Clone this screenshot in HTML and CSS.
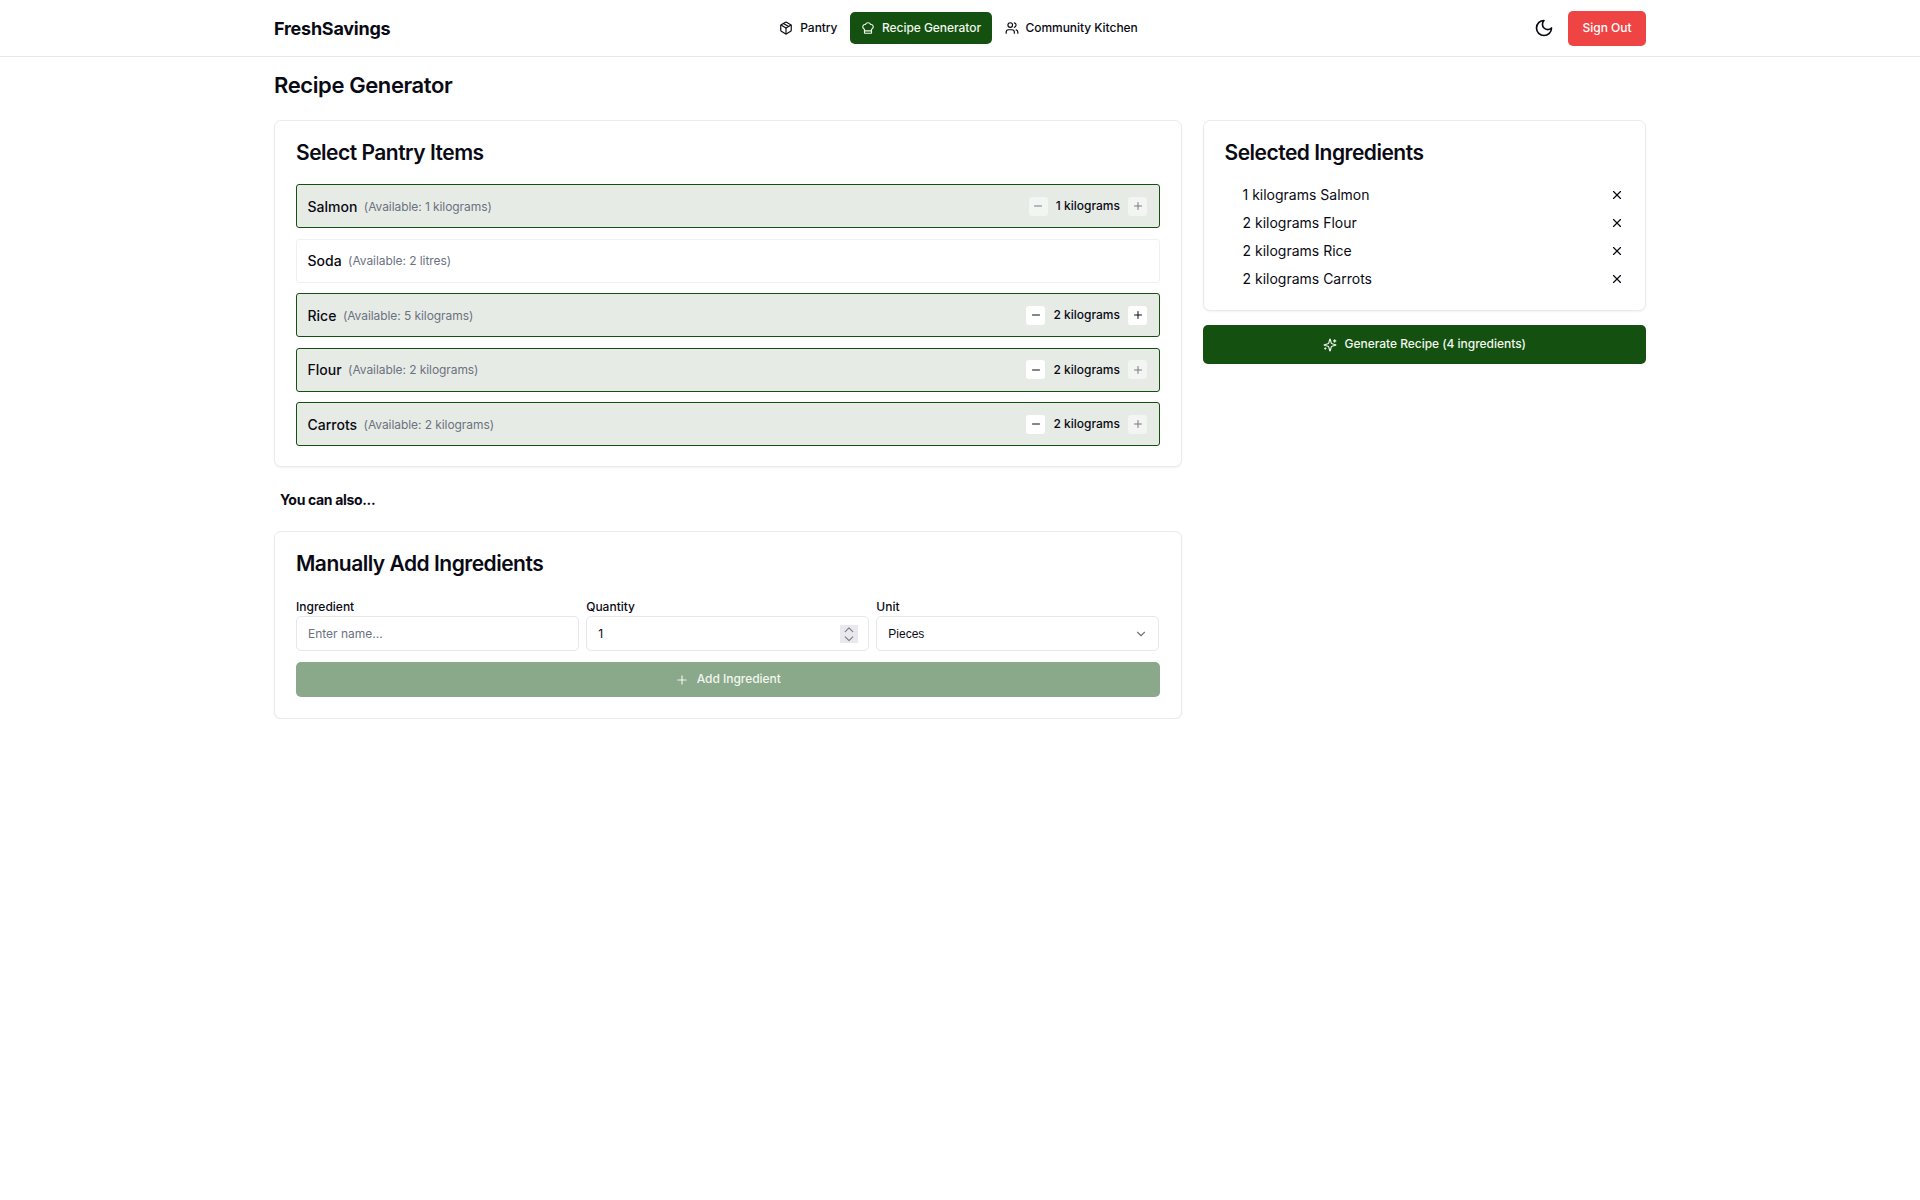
FILE: index.html
```html
<!DOCTYPE html>
<html lang="en">
<head>
<meta charset="utf-8">
<title>FreshSavings</title>
<link rel="stylesheet" href="styles.css">
</head>
<body>
<svg class="sprite" width="0" height="0" aria-hidden="true">
  <symbol id="i-package" viewBox="0 0 24 24"><path d="M11 21.73a2 2 0 0 0 2 0l7-4A2 2 0 0 0 21 16V8a2 2 0 0 0-1-1.73l-7-4a2 2 0 0 0-2 0l-7 4A2 2 0 0 0 3 8v8a2 2 0 0 0 1 1.73z"/><path d="M12 22V12"/><path d="m3.3 7 8.7 5 8.7-5"/><path d="m7.5 4.27 9 5.15"/></symbol>
  <symbol id="i-chef" viewBox="0 0 24 24"><path d="M17 21a1 1 0 0 0 1-1v-5.35c0-.457.316-.844.727-1.041a4 4 0 0 0-2.134-7.589 5 5 0 0 0-9.186 0 4 4 0 0 0-2.134 7.588c.411.198.727.585.727 1.041V20a1 1 0 0 0 1 1Z"/><path d="M6 17h12"/></symbol>
  <symbol id="i-users" viewBox="0 0 24 24"><path d="M16 21v-2a4 4 0 0 0-4-4H6a4 4 0 0 0-4 4v2"/><circle cx="9" cy="7" r="4"/><path d="M22 21v-2a4 4 0 0 0-3-3.87"/><path d="M16 3.13a4 4 0 0 1 0 7.75"/></symbol>
  <symbol id="i-moon" viewBox="0 0 24 24"><path d="M12 3a6 6 0 0 0 9 9 9 9 0 1 1-9-9Z"/></symbol>
  <symbol id="i-sparkles" viewBox="0 0 24 24"><path d="M9.937 15.5A2 2 0 0 0 8.5 14.063l-6.135-1.582a.5.5 0 0 1 0-.962L8.5 9.936A2 2 0 0 0 9.937 8.5l1.582-6.135a.5.5 0 0 1 .963 0L14.063 8.5A2 2 0 0 0 15.5 9.937l6.135 1.581a.5.5 0 0 1 0 .964L15.5 14.063a2 2 0 0 0-1.437 1.437l-1.582 6.135a.5.5 0 0 1-.963 0z"/><path d="M20 3v4"/><path d="M22 5h-4"/><path d="M4 17v2"/><path d="M5 18H3"/></symbol>
  <symbol id="i-x" viewBox="0 0 24 24"><path d="M18 6 6 18"/><path d="m6 6 12 12"/></symbol>
  <symbol id="i-plus" viewBox="0 0 24 24"><path d="M5 12h14"/><path d="M12 5v14"/></symbol>
  <symbol id="i-minus" viewBox="0 0 24 24"><path d="M5 12h14"/></symbol>
  <symbol id="i-chevron" viewBox="0 0 24 24"><path d="m6 9 6 6 6-6"/></symbol>
  <symbol id="i-spin-up" viewBox="4 6 16 12"><path d="m6 15 6-6 6 6"/></symbol>
  <symbol id="i-spin-down" viewBox="4 6 16 12"><path d="m6 9 6 6 6-6"/></symbol>
</svg>

<header class="topbar">
  <div class="topbar-inner">
    <div class="brand">FreshSavings</div>
    <nav class="nav">
      <a class="nav-link"><svg class="icon"><use href="#i-package"/></svg><span class="nav-text">Pantry</span></a>
      <a class="nav-link nav-link-active"><svg class="icon"><use href="#i-chef"/></svg><span class="nav-text">Recipe Generator</span></a>
      <a class="nav-link"><svg class="icon"><use href="#i-users"/></svg><span class="nav-text">Community Kitchen</span></a>
    </nav>
    <div class="topbar-actions">
      <svg class="icon icon-moon"><use href="#i-moon"/></svg>
      <button class="signout">Sign Out</button>
    </div>
  </div>
</header>

<main class="page">
  <h1 class="page-title">Recipe Generator</h1>
  <div class="columns">
    <div class="col-main">
      <section class="card card-pantry">
        <h2 class="card-title">Select Pantry Items</h2>
        <div class="items">
          <div class="item item-on">
            <span class="item-name">Salmon</span><span class="item-avail">(Available: 1 kilograms)</span>
            <div class="stepper">
              <span class="step step-off"><svg class="icon-s"><use href="#i-minus"/></svg></span>
              <span class="qty">1 kilograms</span>
              <span class="step step-off"><svg class="icon-s"><use href="#i-plus"/></svg></span>
            </div>
          </div>
          <div class="item">
            <span class="item-name">Soda</span><span class="item-avail">(Available: 2 litres)</span>
          </div>
          <div class="item item-on">
            <span class="item-name">Rice</span><span class="item-avail">(Available: 5 kilograms)</span>
            <div class="stepper">
              <span class="step"><svg class="icon-s"><use href="#i-minus"/></svg></span>
              <span class="qty">2 kilograms</span>
              <span class="step"><svg class="icon-s"><use href="#i-plus"/></svg></span>
            </div>
          </div>
          <div class="item item-on">
            <span class="item-name">Flour</span><span class="item-avail">(Available: 2 kilograms)</span>
            <div class="stepper">
              <span class="step"><svg class="icon-s"><use href="#i-minus"/></svg></span>
              <span class="qty">2 kilograms</span>
              <span class="step step-off"><svg class="icon-s"><use href="#i-plus"/></svg></span>
            </div>
          </div>
          <div class="item item-on">
            <span class="item-name">Carrots</span><span class="item-avail">(Available: 2 kilograms)</span>
            <div class="stepper">
              <span class="step"><svg class="icon-s"><use href="#i-minus"/></svg></span>
              <span class="qty">2 kilograms</span>
              <span class="step step-off"><svg class="icon-s"><use href="#i-plus"/></svg></span>
            </div>
          </div>
        </div>
      </section>

      <p class="also">You can also...</p>

      <section class="card card-manual">
        <h2 class="card-title">Manually Add Ingredients</h2>
        <div class="form-grid">
          <label class="field"><span class="field-label">Ingredient</span>
            <input class="control" type="text" placeholder="Enter name...">
          </label>
          <label class="field"><span class="field-label">Quantity</span>
            <span class="number-wrap">
              <input class="control control-number" type="number" value="1">
              <span class="spinner"><svg class="icon-spin"><use href="#i-spin-up"/></svg><svg class="icon-spin"><use href="#i-spin-down"/></svg></span>
            </span>
          </label>
          <div class="field"><span class="field-label">Unit</span>
            <div class="control control-select">Pieces<svg class="icon-c"><use href="#i-chevron"/></svg></div>
          </div>
        </div>
        <button class="add-btn"><svg class="icon"><use href="#i-plus"/></svg><span class="btn-text">Add Ingredient</span></button>
      </section>
    </div>

    <aside class="col-side">
      <section class="card card-selected">
        <h2 class="card-title">Selected Ingredients</h2>
        <ul class="selected">
          <li class="selected-row">1 kilograms Salmon<svg class="icon-x"><use href="#i-x"/></svg></li>
          <li class="selected-row">2 kilograms Flour<svg class="icon-x"><use href="#i-x"/></svg></li>
          <li class="selected-row">2 kilograms Rice<svg class="icon-x"><use href="#i-x"/></svg></li>
          <li class="selected-row">2 kilograms Carrots<svg class="icon-x"><use href="#i-x"/></svg></li>
        </ul>
      </section>
      <button class="generate"><svg class="icon"><use href="#i-sparkles"/></svg><span class="btn-text">Generate Recipe (4 ingredients)</span></button>
    </aside>
  </div>
</main>
</body>
</html>
```

FILE: styles.css
```css
* { box-sizing: border-box; }
html, body { margin: 0; padding: 0; }
body {
  background: #fff;
  color: #0a0a14;
  font-family: Inter, "Liberation Sans", sans-serif;
  font-size: 14px;
}
.sprite { position: absolute; }
symbol, .icon, .icon-s, .icon-c, .icon-x, .icon-spin {
  fill: none;
  stroke: currentColor;
  stroke-width: 2;
  stroke-linecap: round;
  stroke-linejoin: round;
}
.icon { width: 14px; height: 14px; flex: none; }
.icon-s { width: 12px; height: 12px; }
.icon-c { width: 14px; height: 14px; color: #777; stroke-width: 1.6; }
.icon-x { width: 14px; height: 14px; margin-top: 2px; }
.icon-spin { width: 10px; height: 7.5px; color: #808086; }

.topbar { height: 57px; border-bottom: 1px solid #e5e7eb; }
.topbar-inner {
  width: 1372px;
  height: 56px;
  margin-left: 274px;
  display: grid;
  grid-template-columns: 1fr auto 1fr;
  align-items: center;
}
.brand { font-size: 18px; font-weight: 700; letter-spacing: -0.25px; }
.nav { display: flex; gap: 2px; margin-left: -3px; }
.nav-link {
  display: flex;
  align-items: center;
  gap: 7px;
  height: 32px;
  padding: 0 11px;
  border-radius: 5px;
  font-size: 12px;
  font-weight: 500;
  letter-spacing: -0.05px;
}
.nav-text { padding-bottom: 2px; }
.nav-link-active { background: #14500f; color: #f1f7ee; padding: 0 10.5px; }
.topbar-actions { display: flex; align-items: center; justify-content: flex-end; gap: 14px; }
.icon-moon { width: 20px; height: 20px; }
.signout {
  width: 78px;
  height: 35px;
  padding: 0 0 2px;
  border: 0;
  border-radius: 5px;
  background: #ef4444;
  color: #fff;
  font: 500 12px Inter, sans-serif;
}

.page { width: 1372px; margin-left: 274px; }
.page-title { margin: 0; height: 63px; padding-top: 16px; font-size: 22px; line-height: 25px; font-weight: 600; letter-spacing: -0.4px; }
.columns { display: grid; grid-template-columns: 907.5px 443.5px; gap: 21px; align-items: start; }
.col-main, .col-side { display: flex; flex-direction: column; }
.card {
  border: 1px solid #e9eaee;
  border-radius: 7px;
  background: #fff;
  box-shadow: 0 1px 2px rgba(0, 0, 0, .05);
  padding: 0 21px;
}
.card-title { margin: 0; font-size: 21px; line-height: 28px; font-weight: 600; letter-spacing: -0.5px; }
.card-pantry { height: 347px; padding-top: 18px; }
.card-selected { height: 191px; padding-top: 18px; }
.card-manual { height: 188px; padding-top: 18px; }

.items { display: flex; flex-direction: column; gap: 10.5px; margin-top: 17px; }
.item {
  height: 44px;
  display: flex;
  align-items: center;
  padding: 0 11.5px 0 10.5px;
  border: 1px solid #eff0f3;
  border-radius: 3px;
}
.item-on { background: #e7ebe6; border-color: #14500f; }
.item-name { font-size: 14px; font-weight: 500; }
.item-avail { margin-left: 6.5px; font-size: 12px; color: #6b7280; letter-spacing: -0.07px; }
.stepper { margin-left: auto; display: flex; align-items: center; }
.step {
  width: 19px;
  height: 19px;
  display: flex;
  align-items: center;
  justify-content: center;
  background: #fff;
  border-radius: 3px;
}
.step-off { opacity: .5; }
.qty { margin: 0 8px; font-size: 12px; font-weight: 500; padding-bottom: 1px; }

.also { margin: 0; height: 64px; padding: 24px 0 0 6px; font-size: 14px; line-height: 18px; font-weight: 700; letter-spacing: -0.33px; }

.form-grid { display: grid; grid-template-columns: repeat(3, 1fr); gap: 7px; margin-top: 21px; }
.field { display: flex; flex-direction: column; }
.field-label { font-size: 12px; line-height: 15px; font-weight: 500; margin-bottom: 2px; }
.control {
  width: 100%;
  height: 35px;
  padding: 0 11px;
  border: 1px solid #e5e7eb;
  border-radius: 5px;
  background: #fff;
  color: #0a0a14;
  font: 12px "Liberation Sans", sans-serif;
  outline: 0;
}
.control::placeholder { color: #6b7280; font-family: Inter, sans-serif; }
.control-number { font-family: Inter, sans-serif; appearance: textfield; }
.control-number::-webkit-inner-spin-button { display: none; }
.number-wrap { position: relative; display: block; }
.spinner {
  position: absolute;
  top: 9px;
  right: 11px;
  width: 18px;
  height: 18px;
  display: flex;
  flex-direction: column;
  align-items: center;
  justify-content: center;
  gap: 1px;
  background: #e8e8ee;
}
.control-select { display: flex; align-items: center; justify-content: space-between; padding-right: 10px; }
.add-btn {
  width: 100%;
  height: 35px;
  margin-top: 11px;
  display: flex;
  align-items: center;
  justify-content: center;
  gap: 8px;
  border: 0;
  border-radius: 5px;
  background: #8aa88a;
  color: #f1f7ee;
  font: 500 12px Inter, sans-serif;
  letter-spacing: -0.03px;
}
.btn-text { padding-bottom: 2px; }

.selected { list-style: none; margin: 13px 0 0; padding: 0 0 0 18px; }
.selected-row {
  height: 28px;
  display: flex;
  align-items: center;
  justify-content: space-between;
  font-size: 14px;
}
.generate {
  height: 39px;
  margin-top: 14px;
  display: flex;
  align-items: center;
  justify-content: center;
  gap: 8px;
  border: 0;
  border-radius: 5px;
  background: #14500f;
  color: #f1f7ee;
  font: 500 12px Inter, sans-serif;
  letter-spacing: -0.03px;
}
```
